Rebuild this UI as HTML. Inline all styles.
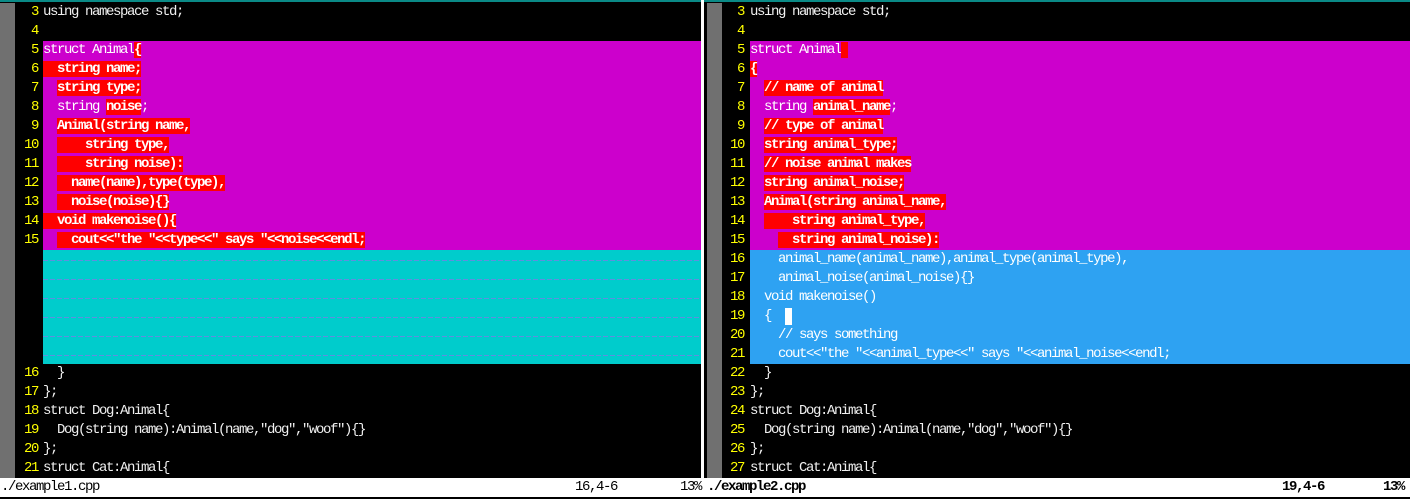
<!DOCTYPE html>
<html><head><meta charset="utf-8"><style>
*{margin:0;padding:0}
body{width:1410px;height:499px;background:#000;overflow:hidden;position:relative;font-family:"Liberation Mono","DejaVu Sans Mono",monospace;font-size:14px;letter-spacing:-1.4px;color:#f0f0f0}
.top{position:absolute;left:0;top:0;width:1410px;height:2px;background:#0a8a86}
.pane{position:absolute;top:3px;height:475px}
.g{position:absolute;top:0;height:475px;width:15px;background:#707070}
.row{position:relative;height:19px;line-height:19px;white-space:pre}
.n{position:absolute;top:0;text-align:right;color:#ffff00}
.t{position:absolute;top:0;bottom:0;right:0}
.m{background:#cc00cc;color:#fff}
.c{background:#00cccc;background-image:repeating-linear-gradient(90deg,#5f8fdf 0 5px,transparent 5px 7px);background-size:100% 1px;background-repeat:no-repeat;background-position:0 10px}
.b{background:#2ea2f2;color:#fff}
i{font-style:normal;font-weight:bold;background:#ff0000;color:#fff}
#L{left:0;width:701px}
#L .n{left:14px;width:24px}
#L .t{left:43px}
#R{left:707px;width:703px}
#R .g{left:0}
#R .n{left:15px;width:22px}
#R .t{left:43px}
.div1{position:absolute;left:701px;top:0;width:3px;height:478px;background:#fff}
.cur{display:inline-block;width:7px;height:17px;background:#fff;vertical-align:top;margin-top:1px}
.st{position:absolute;left:0;top:478px;width:1410px;height:19px;background:#fff;color:#000;line-height:19px;white-space:pre}
.st span{position:absolute;top:0}
.st .bd{font-weight:bold}
</style></head><body>
<div class="top"></div>
<div class="pane" id="L"><div class="g"></div>
<div class="row"><span class="n">3</span><span class="t">using namespace std;</span></div>
<div class="row"><span class="n">4</span><span class="t"></span></div>
<div class="row"><span class="n">5</span><span class="t m">struct Animal<i>{</i></span></div>
<div class="row"><span class="n">6</span><span class="t m"><i>  string name;</i></span></div>
<div class="row"><span class="n">7</span><span class="t m">  <i>string type;</i></span></div>
<div class="row"><span class="n">8</span><span class="t m">  string <i>noise</i>;</span></div>
<div class="row"><span class="n">9</span><span class="t m">  <i>Animal(string name,</i></span></div>
<div class="row"><span class="n">10</span><span class="t m">  <i>    string type,</i></span></div>
<div class="row"><span class="n">11</span><span class="t m">  <i>    string noise):</i></span></div>
<div class="row"><span class="n">12</span><span class="t m">  <i>  name(name),type(type),</i></span></div>
<div class="row"><span class="n">13</span><span class="t m">  <i>  noise(noise){}</i></span></div>
<div class="row"><span class="n">14</span><span class="t m"><i>  void makenoise(){</i></span></div>
<div class="row"><span class="n">15</span><span class="t m">  <i>  cout&lt;&lt;"the "&lt;&lt;type&lt;&lt;" says "&lt;&lt;noise&lt;&lt;endl;</i></span></div>
<div class="row"><span class="t c"></span></div>
<div class="row"><span class="t c"></span></div>
<div class="row"><span class="t c"></span></div>
<div class="row"><span class="t c"></span></div>
<div class="row"><span class="t c"></span></div>
<div class="row"><span class="t c"></span></div>
<div class="row"><span class="n">16</span><span class="t">  }</span></div>
<div class="row"><span class="n">17</span><span class="t">};</span></div>
<div class="row"><span class="n">18</span><span class="t">struct Dog:Animal{</span></div>
<div class="row"><span class="n">19</span><span class="t">  Dog(string name):Animal(name,"dog","woof"){}</span></div>
<div class="row"><span class="n">20</span><span class="t">};</span></div>
<div class="row"><span class="n">21</span><span class="t">struct Cat:Animal{</span></div>
</div>
<div class="div1"></div>
<div class="pane" id="R"><div class="g"></div>
<div class="row"><span class="n">3</span><span class="t">using namespace std;</span></div>
<div class="row"><span class="n">4</span><span class="t"></span></div>
<div class="row"><span class="n">5</span><span class="t m">struct Animal<i> </i></span></div>
<div class="row"><span class="n">6</span><span class="t m"><i>{</i></span></div>
<div class="row"><span class="n">7</span><span class="t m">  <i>// name of animal</i></span></div>
<div class="row"><span class="n">8</span><span class="t m">  string <i>animal_name</i>;</span></div>
<div class="row"><span class="n">9</span><span class="t m">  <i>// type of animal</i></span></div>
<div class="row"><span class="n">10</span><span class="t m">  <i>string animal_type;</i></span></div>
<div class="row"><span class="n">11</span><span class="t m">  <i>// noise animal makes</i></span></div>
<div class="row"><span class="n">12</span><span class="t m">  <i>string animal_noise;</i></span></div>
<div class="row"><span class="n">13</span><span class="t m">  <i>Animal(string animal_name,</i></span></div>
<div class="row"><span class="n">14</span><span class="t m">  <i>    string animal_type,</i></span></div>
<div class="row"><span class="n">15</span><span class="t m">    <i>  string animal_noise):</i></span></div>
<div class="row"><span class="n">16</span><span class="t b">    animal_name(animal_name),animal_type(animal_type),</span></div>
<div class="row"><span class="n">17</span><span class="t b">    animal_noise(animal_noise){}</span></div>
<div class="row"><span class="n">18</span><span class="t b">  void makenoise()</span></div>
<div class="row"><span class="n">19</span><span class="t b">  {  <span class="cur"></span></span></div>
<div class="row"><span class="n">20</span><span class="t b">    // says something</span></div>
<div class="row"><span class="n">21</span><span class="t b">    cout&lt;&lt;"the "&lt;&lt;animal_type&lt;&lt;" says "&lt;&lt;animal_noise&lt;&lt;endl;</span></div>
<div class="row"><span class="n">22</span><span class="t">  }</span></div>
<div class="row"><span class="n">23</span><span class="t">};</span></div>
<div class="row"><span class="n">24</span><span class="t">struct Dog:Animal{</span></div>
<div class="row"><span class="n">25</span><span class="t">  Dog(string name):Animal(name,"dog","woof"){}</span></div>
<div class="row"><span class="n">26</span><span class="t">};</span></div>
<div class="row"><span class="n">27</span><span class="t">struct Cat:Animal{</span></div>
</div>
<div class="st">
<span style="left:1px">./example1.cpp</span>
<span style="left:575px">16,4-6</span>
<span style="left:680px">13%</span>
<span class="bd" style="left:707px">./example2.cpp</span>
<span class="bd" style="left:1282px">19,4-6</span>
<span class="bd" style="left:1383px">13%</span>
</div>
</body></html>
